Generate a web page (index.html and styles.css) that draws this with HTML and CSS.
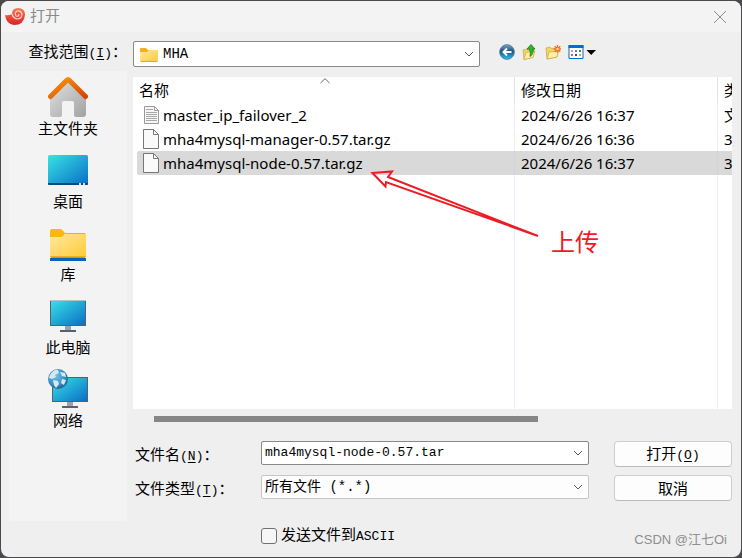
FILE: index.html
```html
<!DOCTYPE html>
<html lang="zh-CN">
<head>
<meta charset="utf-8">
<meta name="viewport" content="width=device-width, initial-scale=1">
<title>打开</title>
<link rel="stylesheet" href="styles.css">
</head>
<body>
<svg class="defs" aria-hidden="true">
  <defs>
    <linearGradient id="screen" x1="0" y1="0" x2="1" y2="1"><stop offset="0" stop-color="#37e3e6"/><stop offset="1" stop-color="#0a6cc4"/></linearGradient>
    <linearGradient id="folder" x1="0" y1="0" x2="1" y2="1"><stop offset="0" stop-color="#ffe9a0"/><stop offset="1" stop-color="#ffca38"/></linearGradient>
    <linearGradient id="wall" x1="0" y1="0" x2="1" y2="1"><stop offset="0" stop-color="#e2e2e2"/><stop offset="1" stop-color="#a2a2a2"/></linearGradient>
    <linearGradient id="roof" x1="0" y1="0" x2="1" y2="1"><stop offset="0" stop-color="#f99a08"/><stop offset="1" stop-color="#d84208"/></linearGradient>
    <linearGradient id="shell" x1="0" y1="0" x2="0" y2="1"><stop offset="0" stop-color="#f47b52"/><stop offset="1" stop-color="#dc1f2c"/></linearGradient>
    <linearGradient id="ball" x1="0" y1="0" x2="0" y2="1"><stop offset="0" stop-color="#7ea0bd"/><stop offset="0.45" stop-color="#1b5488"/><stop offset="1" stop-color="#2cc0ee"/></linearGradient>
    <radialGradient id="globe" cx="0.4" cy="0.35" r="0.7"><stop offset="0" stop-color="#6dc0ea"/><stop offset="0.6" stop-color="#3d92c6"/><stop offset="1" stop-color="#225d88"/></radialGradient>
  </defs>
</svg>
<main class="dialog">
  <header class="titlebar">
    <svg class="logo" viewBox="0 0 22 20" aria-hidden="true">
      <path d="M1 8Q4 9 8 7Q8 1 14 1Q21 1 21 8Q20 18 10 18Q2 17 1 8Z" fill="url(#shell)"/>
      <path d="M8 7Q9 11 13 12Q18 12 18 7Q17 3 13 4Q10 6 12 9Q15 10 15 7" fill="none" stroke="#ffd8c8" stroke-width="1.2"/>
    </svg>
    <h1>打开</h1>
    <button class="close" type="button" aria-label="关闭"><svg viewBox="0 0 14 14"><path d="M1 1L13 13M13 1L1 13"/></svg></button>
  </header>
  <form class="body">
    <label class="look-label" for="look">查找范围<span class="mono">(<u>I</u>)</span>：</label>
    <div class="look-row">
      <div class="combo look">
        <svg class="combo-icon" viewBox="0 0 18 16" aria-hidden="true"><path d="M0 2Q0 1 1 1H6L8 3H17V6H0Z" fill="#f2b01e"/><path d="M0 5H7L9 3H17Q18 3 18 4V14Q18 15 17 15H1Q0 15 0 14Z" fill="url(#folder)"/><path d="M1 14.5H17" stroke="#e3a520"/></svg>
        <select id="look"><option>MHA</option></select>
        <svg class="chevron" viewBox="0 0 10 6" aria-hidden="true"><path d="M1 1L5 5L9 1"/></svg>
      </div>
      <div class="tools">
        <button type="button" aria-label="后退"><svg viewBox="0 0 16 16"><circle cx="8" cy="8" r="7.4" fill="url(#ball)" stroke="#547d9e" stroke-width=".8"/><path d="M12.5 8H4.5M8 4.5L4.5 8L8 11.5" fill="none" stroke="#fff" stroke-width="2"/></svg></button>
        <button type="button" aria-label="向上"><svg viewBox="0 0 16 16"><path d="M1 6L5 5L6 6L12 5L11 13L2 15.5Z" fill="#f1d36a" stroke="#d0a336" stroke-width=".7"/><path d="M2 15.500L4 8.500L13 7L11 13.500Z" fill="#fff0a8" stroke="#d0a336" stroke-width=".7"/><path d="M5 5L9 .5L13 5H11Q12 10 8 12.500Q9 9 7.500 5Z" fill="#2fb62b" stroke="#17751b" stroke-width=".8"/></svg></button>
        <button type="button" aria-label="新建文件夹"><svg viewBox="0 0 16 16"><path d="M1 4L5 3L6.5 4.5L12 4V13L2 15Z" fill="#f1d36a" stroke="#d0a336" stroke-width=".7"/><path d="M2 15L4 8L13.5 7L12 13Z" fill="#fff0a8" stroke="#d0a336" stroke-width=".7"/><path d="M12.5 1V9M8.5 5H16M9.7 2.2L15.3 7.8M15.3 2.2L9.7 7.8" stroke="#f06a32" stroke-width="1.3"/><circle cx="12.5" cy="5" r="1.3" fill="#ffe26a"/></svg></button>
        <button class="view" type="button" aria-label="视图"><svg viewBox="0 0 28 16"><path d="M1 1.500H15V14.500H1Z" fill="#fff" stroke="#0a66c8"/><path d="M.5 1H15.500V4H.5Z" fill="#0a6bd0"/><path d="M3 6h2v2H3z" fill="#b69ac0"/><path d="M7 6h2v2H7z" fill="#5083c8"/><path d="M11 6h2v2h-2z" fill="#36944b"/><path d="M3 10h2v2H3z" fill="#e0583e"/><path d="M7 10h2v2H7z" fill="#154f9c"/><path d="M11 10h2v2h-2z" fill="#d7a437"/><path d="M18.500 6H28L23.200 11Z" fill="#000"/></svg></button>
      </div>
    </div>

    <nav class="places" aria-label="位置">
      <button type="button">
        <svg viewBox="0 0 40 40"><path d="M2 18L20 3L38 18V37Q38 40 35 40H28Q26 40 26 38V26Q26 24 24 24H16Q14 24 14 26V38Q14 40 12 40H5Q2 40 2 37Z" fill="url(#wall)"/><path d="M2.500 19.500L18.500 3.500Q20 2 21.500 3.500L37.500 19.500" fill="none" stroke="url(#roof)" stroke-width="5" stroke-linecap="round" stroke-linejoin="round"/></svg>主文件夹</button>
      <button type="button">
        <svg viewBox="0 0 40 40"><rect y="5" width="40" height="30" rx="1.500" fill="url(#screen)"/><path d="M0 33H40V34Q40 35 39 35H1Q0 35 0 34Z" fill="#084a7e"/><path d="M31 33h2v2h-2zM35 33h2v2h-2z" fill="#c7e2f5"/></svg>桌面</button>
      <button type="button">
        <svg viewBox="0 0 40 40"><path d="M2 8Q2 6 4 6H12Q14 6 17 10H37V20H2Z" fill="#f9b815"/><path d="M2 14H13Q15 14 17 10H37Q38 10 38 11V34H2Z" fill="url(#folder)"/><path d="M17 10.500H37M2 33.500H38" stroke="#eab024"/><path d="M2 35H38V38H2Z" fill="#0763bb"/><path d="M3 34H37V35H3Z" fill="#42b8ee"/></svg>库</button>
      <button type="button">
        <svg viewBox="0 0 40 40"><path d="M17 30H23V35H17Z" fill="#9aa3ac"/><path d="M12 34H28V36H12Z" fill="#59616a"/><rect x="2.500" y="4.500" width="35" height="25" fill="url(#screen)" stroke="#56616c"/><path d="M2 4.500H38" stroke="#b8c0c6"/></svg>此电脑</button>
      <button type="button">
        <svg viewBox="0 0 40 40"><path d="M19 33H25V37H19Z" fill="#9aa3ac"/><path d="M14 37H30V39H14Z" fill="#59616a"/><rect x="4.500" y="8.500" width="35" height="24" fill="url(#screen)" stroke="#56616c"/><circle cx="10" cy="10" r="10" fill="url(#globe)"/><path d="M2 6Q6 0 10 1L11 4L7 6L8 8L4 10L1 9ZM12 3L17 4L18 8L14 7ZM5 11L10 12L11 15L8 19L6 16ZM14 10L18 11L16 16L13 14Z" fill="#d5e9ef"/></svg>网络</button>
    </nav>

    <section class="content">
      <div class="list">
        <table>
          <colgroup><col class="col-name"><col class="col-date"><col class="col-type"></colgroup>
          <thead><tr><th>名称</th><th>修改日期</th><th>类</th></tr></thead>
          <tbody>
            <tr><td><span class="file"><svg viewBox="0 0 18 20"><path d="M2.500 1.500H12.500L16.500 5.500V18.500H2.500Z" fill="#f6f6f6" stroke="#999"/><path d="M12.500 1.500V5.500H16.500" fill="none" stroke="#999"/><path d="M4 4.500H11M4 7.500H15M4 9.500H15M4 11.500H15M4 13.500H15M4 15.500H15" stroke="#a7a7a7"/></svg>master_ip_failover_2</span></td><td>2024/6/26 16:37</td><td>文</td></tr>
            <tr><td><span class="file"><svg viewBox="0 0 18 20"><path d="M1.500 .5H11.500L16.500 5.500V19.500H1.500Z" fill="#fafafa" stroke="#777"/><path d="M11.500 .5V5.500H16.500" fill="none" stroke="#777"/></svg>mha4mysql-manager-0.57.tar.gz</span></td><td>2024/6/26 16:36</td><td>3</td></tr>
            <tr class="selected"><td><span class="file"><svg viewBox="0 0 18 20"><path d="M1.500 .5H11.500L16.500 5.500V19.500H1.500Z" fill="#fafafa" stroke="#777"/><path d="M11.500 .5V5.500H16.500" fill="none" stroke="#777"/></svg>mha4mysql-node-0.57.tar.gz</span></td><td>2024/6/26 16:37</td><td>3</td></tr>
            <tr class="rest"><td></td><td></td><td></td></tr>
          </tbody>
        </table>
        <svg class="sort" viewBox="0 0 10 6" aria-hidden="true"><path d="M.5 5L5 .7L9.500 5"/></svg>
        <svg class="arrow" viewBox="0 0 170 68" aria-hidden="true"><path d="M2.500 3L22 1.500L18 7L168 66L16 12L15.500 16.500Z"/></svg>
        <span class="note">上传</span>
      </div>
      <div class="scroll"><div class="thumb"></div></div>
      <div class="fields">
        <label for="name">文件名<span class="mono">(<u>N</u>)</span>：</label>
        <div class="combo strong">
          <input id="name" class="mono" type="text" value="mha4mysql-node-0.57.tar">
          <svg class="chevron" viewBox="0 0 10 6" aria-hidden="true"><path d="M1 1L5 5L9 1"/></svg>
        </div>
        <button class="action" type="submit">打开<span class="mono">(<u>O</u>)</span></button>
        <label for="type">文件类型<span class="mono">(<u>T</u>)</span>：</label>
        <div class="combo">
          <select id="type"><option>所有文件 (*.*)</option></select>
          <svg class="chevron" viewBox="0 0 10 6" aria-hidden="true"><path d="M1 1L5 5L9 1"/></svg>
        </div>
        <button class="action" type="button">取消</button>
      </div>
      <div class="footer">
        <label class="check"><input type="checkbox"><span>发送文件到<span class="mono">ASCII</span></span></label>
        <span class="mark">CSDN @江七Oi</span>
      </div>
    </section>
  </form>
</main>
</body>
</html>
```
FILE: styles.css
```css
* { box-sizing: border-box; }

body {
  margin: 0;
  min-height: 100vh;
  display: flex;
  padding: 1px;
  background: #4a4a4c;
  color: #000;
  font: 15px/20px "Noto Sans", "Noto Sans CJK SC", sans-serif;
}

button, input, select { font: inherit; color: inherit; margin: 0; }
button { padding: 0; border: 0; background: none; }
svg { display: block; flex: none; }
.defs { position: absolute; width: 0; height: 0; }

.mono { font-family: "Liberation Mono", "Noto Sans CJK SC", monospace; font-size: 13px; }
u { text-underline-offset: 2px; }

.dialog {
  flex: 1;
  display: flex;
  flex-direction: column;
  border-radius: 8px;
  overflow: hidden;
  background: #efefef;
}

.titlebar {
  display: flex;
  align-items: center;
  height: 31px;
  padding: 0 14px 0 3px;
  background: #f3f3f3;
}
.logo { width: 22px; height: 20px; }
.titlebar h1 { flex: 1; margin: 0 0 0 4px; font-size: 15px; line-height: 24px; padding-bottom: 4px; font-weight: 400; color: #8a8a8a; }
.close svg { width: 14px; height: 14px; fill: none; stroke: #8c8c8c; stroke-width: 1; }

.body {
  flex: 1;
  display: grid;
  grid-template-columns: 118px minmax(0, 1fr);
  grid-template-rows: auto 1fr;
  column-gap: 6px;
  padding: 9px 9px 8px 8px;
}
.look-label { justify-self: end; white-space: nowrap; }
.look-row { display: flex; align-items: flex-start; gap: 19px; padding-bottom: 4px; }

.combo {
  position: relative;
  display: flex;
  height: 24px;
  border: 1px solid #c6c6c6;
  border-radius: 2px;
  background: #fdfdfd;
}
.combo select, .combo input {
  flex: 1;
  min-width: 0;
  appearance: none;
  border: 0;
  outline: 0;
  padding: 0 24px 0 3px;
  background: transparent;
}
.combo select { font-family: "Liberation Mono", "Noto Sans CJK SC", monospace; font-size: 14px; }
.combo.look { width: 58%; height: 26px; border-color: #888; background: #fff; }
.combo.look select { padding-left: 29px; }
.combo.strong { border-color: #888; background: #fff; }
.combo-icon { position: absolute; left: 6px; top: 5px; width: 18px; height: 16px; }
.chevron {
  position: absolute;
  right: 5px;
  top: 50%;
  width: 10px;
  height: 6px;
  margin-top: -3px;
  fill: none;
  stroke: #555;
  pointer-events: none;
}

.tools { display: flex; gap: 7px; padding-top: 3px; }
.tools svg { width: 16px; height: 16px; }
.tools .view svg { width: 28px; }

.places {
  display: flex;
  flex-direction: column;
  gap: 12px;
  padding-top: 6px;
  margin-bottom: 28px;
  background: #f3f3f3;
}
.places button { display: flex; flex-direction: column; align-items: center; gap: 1px; }
.places svg { width: 40px; height: 40px; }

.content { display: flex; flex-direction: column; padding-top: 6px; }

.list {
  position: relative;
  flex: 1;
  display: grid;
  background: #fff;
  overflow: hidden;
}
table { width: 100%; height: 100%; table-layout: fixed; border-spacing: 0; padding-left: 4px; }
.col-date { width: 203px; }
.col-type { width: 14px; }
th, td { height: 24px; padding: 0 0 0 6px; text-align: left; white-space: nowrap; overflow: hidden; }
th { height: 26px; font-weight: 400; border-right: 1px solid #e2e2e2; }
td { border-right: 1px solid #e6effa; }
th:first-child, td:first-child { padding-left: 2px; }
th:last-child, td:last-child { border-right: 0; }
.rest td { height: auto; }
.selected td { background: #d9d9d9; border-color: #cfd6de; }
.selected td:first-child { border-radius: 2px 0 0 2px; }
.file { display: flex; align-items: center; gap: 3px; padding-left: 3px; }
.file svg { width: 18px; height: 20px; }

.sort { position: absolute; left: 187px; top: 1px; width: 10px; height: 6px; fill: none; stroke: #666; }
.arrow { position: absolute; left: 237px; top: 93px; width: 170px; height: 68px; fill: none; stroke: #ed1c24; stroke-width: 2; }
.note { position: absolute; left: 418px; top: 149px; font-size: 24px; line-height: 32px; color: #ed1c24; }

.scroll { padding: 7px 21px 19px; }
.thumb { width: 69%; height: 6px; background: #868686; }

.fields {
  display: grid;
  grid-template-columns: 103px minmax(0, 1fr) 118px;
  grid-auto-rows: 26px;
  gap: 8px 25px;
}
.fields label { padding: 3px 0 0 2px; white-space: nowrap; }
.action {
  border: 1px solid #cdcdcd;
  border-bottom-color: #bbb;
  border-radius: 4px;
  background: #fdfdfd;
}

.footer {
  display: flex;
  justify-content: space-between;
  align-items: flex-end;
  padding: 23px 5px 0 128px;
}
.check { display: flex; align-items: center; padding-bottom: 2px; }
.check input {
  appearance: none;
  width: 16px;
  height: 16px;
  margin: 0 4px 0 0;
  border: 1px solid #707070;
  border-radius: 3px;
  background: #f6f6f6;
}
.mark { font: 13px/18px "Liberation Sans", "Noto Sans CJK SC", sans-serif; color: #8e8e8e; }
```
